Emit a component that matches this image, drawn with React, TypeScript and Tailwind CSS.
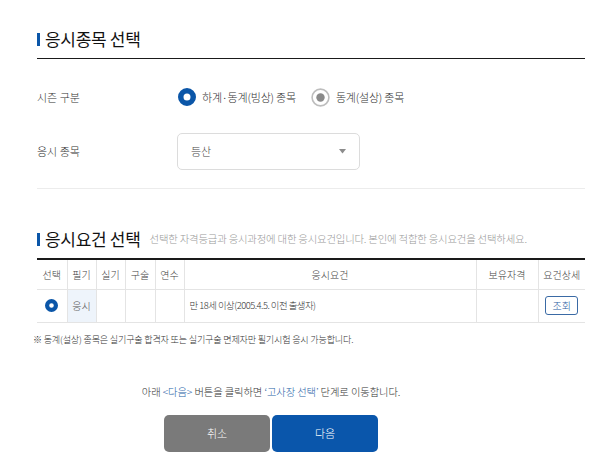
import React from "react";

const font = { fontFamily: '"Noto Sans CJK KR", "Noto Sans", sans-serif' };

function BlueRadio({ size = 18 }: { size?: number }) {
  return (
    <svg width={size} height={size} viewBox="0 0 18 18">
      <circle cx="9" cy="9" r="6.25" fill="none" stroke="#0b56a8" strokeWidth="5.5" />
    </svg>
  );
}

function SmallRadio() {
  return (
    <svg width="13" height="13" viewBox="0 0 13 13">
      <circle cx="6.5" cy="6.5" r="4.4" fill="none" stroke="#0b56a8" strokeWidth="4.2" />
    </svg>
  );
}

function GrayRadio() {
  return (
    <svg width="19" height="19" viewBox="0 0 19 19">
      <circle cx="9.5" cy="9.5" r="8.4" fill="#fff" stroke="#bdbdbd" strokeWidth="1.6" />
      <circle cx="9.5" cy="9.5" r="4.2" fill="#8a8a8a" />
    </svg>
  );
}

function SectionTitle({ children }: { children: React.ReactNode }) {
  return (
    <div className="flex items-center">
      <span className="w-[3px] h-[13px] bg-[#0b56a8] mr-[5px]" />
      <span className="text-[17px] leading-[22px] font-normal text-[#111] tracking-[-0.3px]">{children}</span>
    </div>
  );
}

export default function App() {
  const cols = [30, 29, 29, 30, 29, 292, 62, 47];
  const heads = ["선택", "필기", "실기", "구술", "연수", "응시요건", "보유자격", "요건상세"];
  return (
    <div className="w-[600px] h-[475px] bg-white text-[#333] font-light flex flex-col overflow-hidden" style={font}>
      <div className="ml-[37px] w-[548px]">
        <div className="pt-[28px] pb-[8px] border-b border-[#1a1a1a]">
          <SectionTitle>응시종목 선택</SectionTitle>
        </div>

        <div className="mt-[19px] h-[38px] flex items-center">
          <div className="w-[140px] text-[11px]">시즌 구분</div>
          <label className="flex items-center gap-[6px] ml-[1px]">
            <BlueRadio />
            <span className="text-[11px] text-[#333] tracking-[-0.2px]">하계·동계(빙상) 종목</span>
          </label>
          <label className="flex items-center gap-[6px] ml-[15px]">
            <GrayRadio />
            <span className="text-[11px] text-[#333] tracking-[-0.2px]">동계(설상) 종목</span>
          </label>
        </div>

        <div className="mt-[17px] h-[37px] flex items-center">
          <div className="w-[140px] text-[11px]">응시 종목</div>
          <div className="w-[183px] h-[37px] border border-[#dcdcdc] rounded-[5px] flex items-center justify-between pl-[13px] pr-[13px]">
            <span className="text-[11px] text-[#444]">등산</span>
            <svg width="7" height="5" viewBox="0 0 7 5">
              <path d="M0 0 L7 0 L3.5 4.5 Z" fill="#8c8c8c" />
            </svg>
          </div>
        </div>

        <div className="mt-[18px] border-t border-[#ececec]" />

        <div className="mt-[39px] pb-[8px] flex items-end">
          <SectionTitle>응시요건 선택</SectionTitle>
          <span className="ml-[9px] mb-[3px] text-[10.4px] text-[#999] tracking-[-0.2px]">
            선택한 자격등급과 응시과정에 대한 응시요건입니다. 본인에 적합한 응시요건을 선택하세요.
          </span>
        </div>

        <table className="w-[548px] table-fixed border-collapse border-t-2 border-[#1a1a1a] text-[10px]">
          <colgroup>
            {cols.map((w, i) => (
              <col key={i} style={{ width: w }} />
            ))}
          </colgroup>
          <thead>
            <tr className="h-[30px] border-b border-[#e4e4e4]">
              {heads.map((h, i) => (
                <th
                  key={h}
                  className={`font-light text-[#444] text-center ${i < heads.length - 1 ? "border-r border-[#e4e4e4]" : ""}`}
                >
                  {h}
                </th>
              ))}
            </tr>
          </thead>
          <tbody>
            <tr className="h-[33px] border-b border-[#e4e4e4]">
              <td className="border-r border-[#e4e4e4]">
                <div className="flex justify-center">
                  <SmallRadio />
                </div>
              </td>
              <td className="border-r border-[#e4e4e4] bg-[#eef4fb] text-center text-[#555]">응시</td>
              <td className="border-r border-[#e4e4e4]" />
              <td className="border-r border-[#e4e4e4]" />
              <td className="border-r border-[#e4e4e4]" />
              <td className="border-r border-[#e4e4e4] pl-[5px] text-[#333] text-[9.4px] tracking-[-0.5px]">
                만 18세 이상(2005.4.5. 이전 출생자)
              </td>
              <td className="border-r border-[#e4e4e4]" />
              <td>
                <div className="flex justify-center">
                  <span className="w-[33px] h-[19px] border border-[#3a6aa5] rounded-[3px] text-[#2a5d9f] text-[10px] flex items-center justify-center">
                    조회
                  </span>
                </div>
              </td>
            </tr>
          </tbody>
        </table>

        <div className="-ml-[4px] mt-[9px] text-[9.1px] leading-[14px] text-[#333] tracking-[-0.2px]">
          ※ 동계(설상) 종목은 실기구술 합격자 또는 실기구술 면제자만 필기시험 응시 가능합니다.
        </div>
      </div>

      <div className="w-[542px] flex flex-col items-center">
        <div className="mt-[39px] text-[10.3px] leading-[14px] text-[#333] tracking-[-0.1px]">
          아래 <span className="text-[#2a64a8]">&lt;다음&gt;</span> 버튼을 클릭하면{" "}
          <span className="text-[#2a64a8]">‘고사장 선택’</span> 단계로 이동합니다.
        </div>
        <div className="mt-[16px] flex gap-[2px]">
          <button className="w-[106px] h-[37px] rounded-[5px] bg-[#7a7a7a] text-white text-[11px]">취소</button>
          <button className="w-[106px] h-[37px] rounded-[5px] bg-[#0a56ab] text-white text-[11px]">다음</button>
        </div>
      </div>
    </div>
  );
}
